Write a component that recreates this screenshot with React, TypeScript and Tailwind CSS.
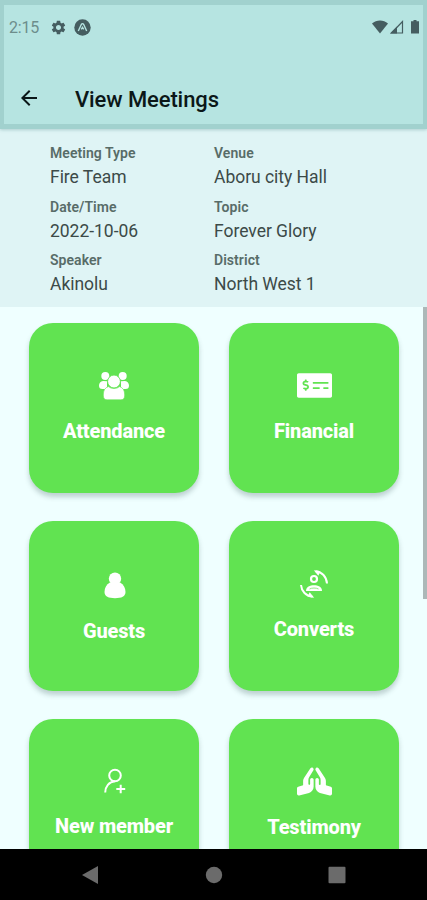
import type { ReactNode } from "react";
import { FaMoneyCheckAlt, FaPrayingHands } from "react-icons/fa";
import { MdSettings, MdArrowBack } from "react-icons/md";

function Field({ label, value }: { label: string; value: string }) {
  return (
    <div className="h-[53.5px] whitespace-nowrap">
      <div className="h-[20px] text-[14px] leading-[18px] font-semibold tracking-[0.05px] text-[#586c68]">{label}</div>
      <div className="h-[27px] text-[17.5px] leading-[26px] tracking-[-0.03px] text-[#3c4a48]">{value}</div>
    </div>
  );
}

function Card({ title, icon, pad }: { title: string; icon: ReactNode; pad: string }) {
  return (
    <div className={`flex h-[170px] w-[170px] flex-col items-center rounded-[24px] bg-[#61e351] text-white shadow-[0_4px_5px_rgba(60,90,90,0.28)] ${pad}`}>
      <div className="flex h-[40px] items-center justify-center">{icon}</div>
      <div className="mt-[12px] text-[20px] leading-[28px] font-extrabold tracking-[-0.15px] whitespace-nowrap">{title}</div>
    </div>
  );
}

function People() {
  return (
    <svg className="mt-[2px]" width="32" height="30" viewBox="0 0 32 30" fill="currentColor">
      <circle cx="7.3" cy="5" r="4" />
      <circle cx="24.7" cy="5" r="4" />
      <path d="M5 10C2.5 10.5 1 12.300 1 14.500C1 17 2 18 4.500 18H9V10.200ZM27 10C29.500 10.500 31 12.300 31 14.500C31 17 30 18 27.500 18H23V10.200Z" />
      <circle cx="16" cy="10.500" r="6.400" stroke="#61e351" strokeWidth=".800" />
      <path stroke="#61e351" strokeWidth=".600" d="M10.500 15.600C7 16.500 5.300 19.500 5.300 24C5.300 27.500 6.500 28.800 9.500 28.800H22.500C25.500 28.800 26.700 27.500 26.700 24C26.700 19.500 25 16.500 21.500 15.600C18.500 18.200 13.500 18.200 10.500 15.600Z" />
    </svg>
  );
}

function Person() {
  return (
    <svg className="mt-[1px] ml-[1px]" width="22" height="27" viewBox="0 0 22 27" fill="currentColor">
      <circle cx="11" cy="6.700" r="6.200" />
      <path d="M5.800 10.500C2.500 12.500.5 16 .5 20C.5 24.500 4.500 26.200 11 26.200S21.500 24.500 21.500 20C21.500 16 19.500 12.500 16.200 10.500Z" />
    </svg>
  );
}

function Convert() {
  return (
    <svg className="mt-[2px]" width="28" height="28" viewBox="0 0 28 28" fill="none" stroke="currentColor">
      <circle cx="14" cy="9" r="3" strokeWidth="2.200" />
      <path fill="currentColor" stroke="none" d="M6 21C6 16.800 10 15.300 14 15.300S22 16.800 22 21Z" />
      <path stroke="#61e351" strokeWidth=".700" d="M9.500 19C11.500 17.700 16.500 17.700 18.500 19" />
      <path strokeWidth="2" d="M15.500 1.300C22 1.700 26.500 6.800 27 13.500M12.500 26.700C6 26.300 1.500 21.200 1 15" />
      <path fill="currentColor" stroke="none" d="M13.800.2 20.500 1.500 18.300 5.800ZM14.200 27.800 7.500 26.500 9.700 22.200Z" />
    </svg>
  );
}

function AddPerson() {
  return (
    <svg className="mt-[2px] ml-[2px]" width="22" height="26" viewBox="0 0 22 26" fill="none" stroke="currentColor" strokeWidth="2">
      <circle cx="11" cy="7.500" r="5.800" />
      <path d="M1.200 24.500C1.200 18.500 5 13.800 11 13.300M16.700 16.700V25.300M12.300 21H21.200" />
    </svg>
  );
}

export default function App() {
  return (
    <main className="flex h-[900px] w-[427px] flex-col overflow-hidden bg-[#efffff] font-['Roboto',sans-serif]">
      <header className="z-10 h-[129px] shrink-0 border-[4px] border-t-[5px] border-b-[5px] border-[#a1d1ce] bg-[#b6e4e1] shadow-[0_1px_3px_rgba(80,140,140,0.35)]">
        <div className="mt-[11px] flex h-[22px] items-center pl-[5px] text-[#455d60]">
          <span className="w-[41px] pt-[1px] text-[16px] tracking-[-0.2px] text-[#6d8d8c]">2:15</span>
          <MdSettings size={17} />
          <svg className="ml-[7px]" width="17" height="17" viewBox="0 0 17 17">
            <circle cx="8.500" cy="8.500" r="8.200" fill="currentColor" />
            <path d="M4.300 12 7.300 5.500Q8.500 3.700 9.700 5.500L12.700 12M7.300 10.300 8.500 8.300 9.700 10.300" fill="none" stroke="#b6e4e1" strokeWidth="1.400" />
          </svg>
          <div className="mr-[3px] ml-auto flex items-center">
            <svg width="48" height="16" viewBox="0 0 48 16" fill="currentColor">
              <path d="M0 4.500C4.500.4 11.500.4 16 4.500L8 14.500Z" />
              <path d="M30.500 2.500V14H19.500Z" fill="none" stroke="currentColor" strokeWidth="1.200" />
              <path d="M18 14.600 25 7.500V14.600Z" />
              <path d="M41.500 1h3v1.300H47v12.300h-8V2.300h2.500Z" />
            </svg>
          </div>
        </div>
        <div className="mt-[44px] flex h-[34px] items-center pl-[13px] text-[#0b1718]">
          <MdArrowBack size={24} className="-mt-[2px]" />
          <h1 className="mt-[2px] ml-[34px] text-[22px] leading-[34px] font-medium tracking-[-0.1px] whitespace-nowrap">View Meetings</h1>
        </div>
      </header>
      <section className="grid h-[178px] shrink-0 grid-cols-[164px_1fr] content-start bg-[#dff4f5] pt-[15px] pl-[50px]">
        <Field label="Meeting Type" value="Fire Team" />
        <Field label="Venue" value="Aboru city Hall" />
        <Field label="Date/Time" value="2022-10-06" />
        <Field label="Topic" value="Forever Glory" />
        <Field label="Speaker" value="Akinolu" />
        <Field label="District" value="North West 1" />
      </section>
      <section className="flex min-h-0 flex-1 items-start justify-between overflow-hidden">
        <div className="grid grid-cols-[170px_170px] gap-x-[30px] gap-y-[28px] pt-[16px] pl-[29px]">
          <Card title="Attendance" pad="pt-[42px]" icon={<People />} />
          <Card title="Financial" pad="pt-[42px]" icon={<FaMoneyCheckAlt size={35} />} />
          <Card title="Guests" pad="pt-[44px]" icon={<Person />} />
          <Card title="Converts" pad="pt-[42px]" icon={<Convert />} />
          <Card title="New member" pad="pt-[41px]" icon={<AddPerson />} />
          <Card title="Testimony" pad="pt-[42px]" icon={<FaPrayingHands size={35} />} />
        </div>
        <div className="h-[292px] w-[4px] bg-[#acb8b8]" />
      </section>
      <nav className="relative z-10 flex h-[51px] shrink-0 items-center justify-center bg-black">
        <svg width="264" height="18" viewBox="0 0 264 18" fill="#6b6b6b">
          <path d="M0 9 16 0V18Z" />
          <circle cx="132" cy="9" r="8.200" />
          <rect x="246.500" y=".700" width="17" height="16.600" rx="1" />
        </svg>
      </nav>
    </main>
  );
}
